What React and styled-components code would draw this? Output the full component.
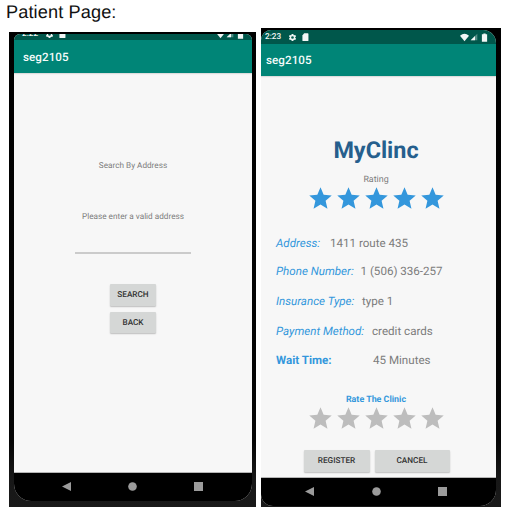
import React from "react";
import styled, { createGlobalStyle } from "styled-components";

const Global = createGlobalStyle`
  * { box-sizing: border-box; }
  body { margin: 0; background: #fff; font-family: Roboto, "Liberation Sans", sans-serif; text-rendering: geometricPrecision; }
`;
const Page = styled.main`
  width: 513px;
  height: 524px;
  overflow: hidden;
`;
const Heading = styled.h1`
  margin: 0;
  height: 28px;
  padding: 1px 0 0 6px;
  font: 400 18.2px/22px "Liberation Sans", Arial, sans-serif;
  letter-spacing: 0.1px;
  color: #111;
  white-space: nowrap;
`;
const Phones = styled.div`
  display: flex;
  align-items: flex-end;
  height: 479px;
  gap: 5px;
  padding-left: 9px;
`;
const Device = styled.section`
  width: ${(p) => p.$w}px;
  height: ${(p) => p.$h}px;
  padding: ${(p) => p.$pad};
  background: linear-gradient(#000 0, #050505 86%, #171717 94%, #191919 100%);
`;
const Screen = styled.div`
  height: 100%;
  display: flex;
  flex-direction: column;
  overflow: hidden;
  border-radius: ${(p) => p.$radius};
  background: #f7f7f7;
`;
const StatusBar = styled.div`
  height: ${(p) => p.$h}px;
  flex: none;
  display: flex;
  align-items: flex-end;
  justify-content: space-between;
  overflow: hidden;
  background: #00574b;
  color: #f2f7f6;
  padding: ${(p) => p.$pad};
`;
const StatusGroup = styled.div`
  display: flex;
  align-items: center;
  height: ${(p) => p.$h}px;
  flex: none;
`;
const Clock = styled.span`
  font-size: 8.2px;
  line-height: 14px;
  font-weight: 500;
  width: 22.5px;
`;
const Glyph = styled.svg`
  display: block;
  flex: none;
  width: ${(p) => p.$s}px;
  height: ${(p) => p.$s}px;
  margin-left: ${(p) => p.$gap || 0}px;
  fill: currentColor;
`;
const AppBar = styled.header`
  flex: none;
  height: ${(p) => p.$h}px;
  line-height: ${(p) => p.$h + 1}px;
  padding-left: ${(p) => p.$left}px;
  background: #008577;
  color: #f5fbfa;
  font-size: 11.6px;
  font-weight: 500;
  letter-spacing: 0.08px;
  box-shadow: 0 1px 1px #ddd;
`;
const Content = styled.div`
  flex: 1;
  min-height: 0;
  display: flex;
  flex-direction: column;
  align-items: center;
  border-bottom: 1px solid #b5b5b5;
  padding: ${(p) => p.$pad};
`;
const Label = styled.div`
  height: ${(p) => p.$h}px;
  line-height: ${(p) => p.$line || p.$h}px;
  margin-bottom: ${(p) => p.$after || 0}px;
  font-size: ${(p) => p.$size}px;
  font-weight: ${(p) => p.$weight || 400};
  color: ${(p) => p.$color || "#7c7c7c"};
  white-space: nowrap;
`;
const Input = styled.div`
  width: 116px;
  height: 29px;
  border-bottom: 2px solid #cbcbcb;
  margin-bottom: 30px;
`;
const Button = styled.button`
  width: ${(p) => p.$w}px;
  height: 21.5px;
  margin: 0 0 ${(p) => p.$after || 0}px;
  padding: 1px 0 0;
  border: 0;
  border-radius: 1px;
  background: #d5d7d6;
  box-shadow: 0 1px 1.5px #bdbdbd;
  color: #333;
  font: 500 8.2px/20.5px Roboto, sans-serif;
  text-rendering: geometricPrecision;
`;
const Actions = styled.div`
  display: flex;
  gap: 5px;
  padding-left: 1px;
`;
const StarRow = styled.div`
  display: flex;
  height: 27px;
  color: ${(p) => p.$color};
  margin-bottom: ${(p) => p.$after}px;
`;
const Detail = styled.div`
  display: flex;
  align-self: flex-start;
  height: ${(p) => p.$h}px;
  line-height: 16px;
  padding-left: ${(p) => p.$left}px;
  font-size: 11.6px;
  white-space: nowrap;
`;
const Term = styled.span`
  width: ${(p) => p.$w}px;
  color: #3497dc;
  font-style: ${(p) => (p.$bold ? "normal" : "italic")};
  font-weight: ${(p) => (p.$bold ? 700 : 400)};
`;
const Value = styled.span`
  color: #7c7c7c;
`;
const NavBar = styled.nav`
  flex: none;
  height: 28px;
  display: flex;
  background: #000;
  color: #9b9b9b;
  padding: ${(p) => p.$pad};
  gap: ${(p) => p.$gap}px;
`;

const Star = () => (
  <Glyph $s={27} $gap={1} viewBox="0 0 24 24">
    <path d="M12 17.27 18.18 21l-1.64-7.03L22 9.24l-7.19-.61L12 2 9.19 8.63 2 9.24l5.46 4.73L5.82 21z" />
  </Glyph>
);
const Stars = ({ color, after }) => (
  <StarRow $color={color} $after={after}>
    {[1, 2, 3, 4, 5].map((n) => <Star key={n} />)}
  </StarRow>
);

const Status = ({ time, h, inner, pad }) => (
  <StatusBar $h={h} $pad={pad}>
    <StatusGroup $h={inner}>
      <Clock>{time}</Clock>
      <Glyph $s={9} viewBox="0 0 24 24">
        <path d="M19.14 12.94c.04-.3.06-.61.06-.94s-.02-.64-.07-.94l2.03-1.58a.5.5 0 0 0 .12-.61l-1.92-3.32a.5.5 0 0 0-.59-.22l-2.39.96a7 7 0 0 0-1.62-.94l-.36-2.54a.5.5 0 0 0-.48-.41h-3.84a.5.5 0 0 0-.47.41l-.36 2.54a7 7 0 0 0-1.62.94l-2.39-.96a.5.5 0 0 0-.59.22L2.74 8.87a.5.5 0 0 0 .12.61l2.03 1.58a6 6 0 0 0 0 1.88l-2.03 1.58a.5.5 0 0 0-.12.61l1.92 3.32c.12.22.37.29.59.22l2.39-.96c.5.38 1.03.7 1.62.94l.36 2.54c.05.24.24.41.48.41h3.84c.24 0 .44-.17.47-.41l.36-2.54a7 7 0 0 0 1.62-.94l2.39.96c.22.08.47 0 .59-.22l1.92-3.32a.5.5 0 0 0-.12-.61zM12 15.6a3.6 3.6 0 1 1 0-7.2 3.6 3.6 0 0 1 0 7.2z" />
      </Glyph>
      <Glyph $s={8.5} $gap={4} viewBox="0 0 24 24">
        <path d="M19 1H9L4 7v14q0 2 2 2h13q2 0 2-2V3q0-2-2-2z" />
      </Glyph>
    </StatusGroup>
    <StatusGroup $h={inner}>
      <Glyph $s={9} viewBox="0 0 24 24"><path d="M12 22 0 7Q12-3 24 7z" /></Glyph>
      <Glyph $s={8} $gap={1} viewBox="0 0 24 24">
        <path opacity=".35" d="M2 22h20V2z" />
        <path d="M2 22h13V9z" />
      </Glyph>
      <Glyph $s={9} $gap={2} viewBox="0 0 24 24"><path d="M9 1h6v2h4v20H5V3h4z" /></Glyph>
    </StatusGroup>
  </StatusBar>
);

const Nav = ({ pad, gap }) => (
  <NavBar $pad={pad} $gap={gap}>
    <Glyph $s={9} viewBox="0 0 9 9"><path d="M0 4.5 9 0v9z" /></Glyph>
    <Glyph $s={9} viewBox="0 0 9 9"><circle cx="4.5" cy="4.5" r="4.3" /></Glyph>
    <Glyph $s={9} viewBox="0 0 9 9"><path d="M0 0h9v9H0z" /></Glyph>
  </NavBar>
);

export default function App() {
  return (
    <>
      <Global />
      <Page>
        <Heading>Patient Page:</Heading>
        <Phones>
          <Device $w={247} $h={475} $pad="2px 4px 6px 5px">
            <Screen $radius="6px 6px 17px 17px">
              <Status time="2:22" h={6} inner={12} pad="0 7px 0 8px" />
              <AppBar $h={33} $left={9}>seg2105</AppBar>
              <Content $pad="85px 0 0">
                <Label $h={16} $size={8.2} $after={35}>Search By Address</Label>
                <Label $h={16} $size={8.2}>Please enter a valid address</Label>
                <Input />
                <Button $w={46} $after={6}>SEARCH</Button>
                <Button $w={46}>BACK</Button>
              </Content>
              <Nav pad="9px 0 0 48px" gap={57} />
            </Screen>
          </Device>
          <Device $w={240} $h={479} $pad="2px 5px 1px 0">
            <Screen $radius="10px 13px 16px 12px">
              <Status time="2:23" h={14} inner={14} pad="0 7px 0 4px" />
              <AppBar $h={32} $left={5}>seg2105</AppBar>
              <Content $pad="59px 5px 0 0">
                <Label $h={30} $size={23.4} $weight={700} $color="#265f8d" $after={7}>MyClinc</Label>
                <Label $h={13} $line={16} $size={8.9}>Rating</Label>
                <Stars color="#3497dc" after={23} />
                <Detail $h={28} $left={15}><Term $w={54}>Address:</Term><Value>1411 route 435</Value></Detail>
                <Detail $h={30} $left={15}><Term $w={84.5}>Phone Number:</Term><Value>1 (506) 336-257</Value></Detail>
                <Detail $h={30} $left={15}><Term $w={86}>Insurance Type:</Term><Value>type 1</Value></Detail>
                <Detail $h={29} $left={15}><Term $w={96}>Payment Method:</Term><Value>credit cards</Value></Detail>
                <Detail $h={40} $left={15}><Term $w={97} $bold>Wait Time:</Term><Value>45 Minutes</Value></Detail>
                <Label $h={13} $line={16} $size={8.9} $weight={700} $color="#3497dc">Rate The Clinic</Label>
                <Stars color="#bdbdbd" after={18} />
                <Actions>
                  <Button $w={66}>REGISTER</Button>
                  <Button $w={75}>CANCEL</Button>
                </Actions>
              </Content>
              <Nav pad="9px 0 0 44px" gap={57.5} />
            </Screen>
          </Device>
        </Phones>
      </Page>
    </>
  );
}
